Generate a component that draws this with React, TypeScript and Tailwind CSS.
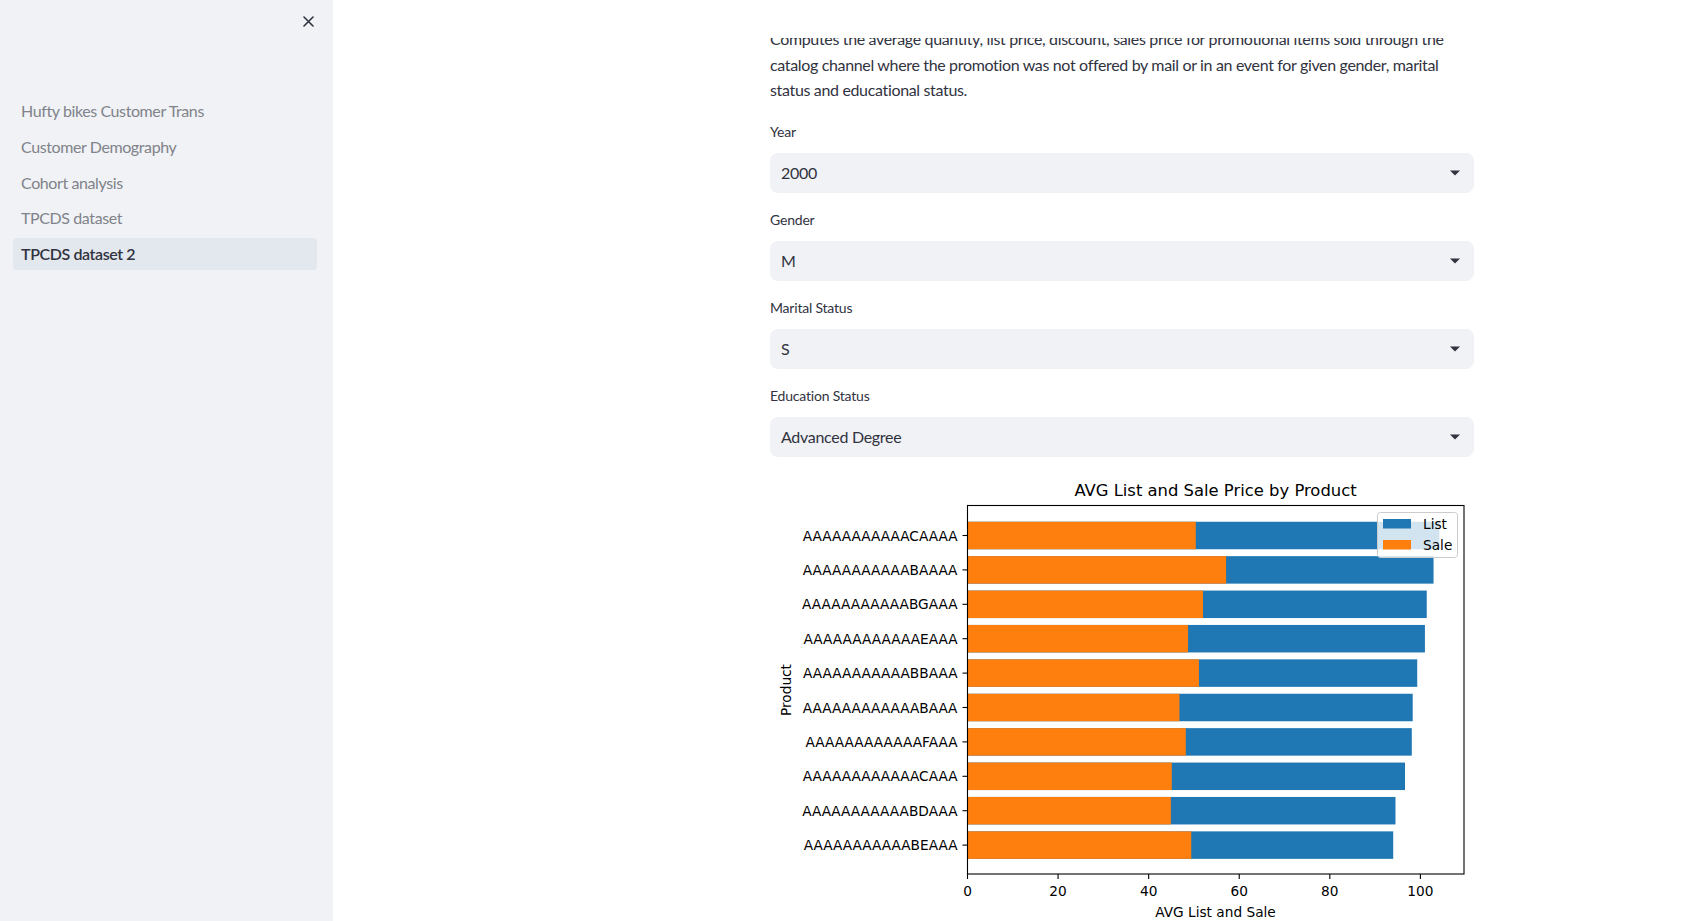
import React from 'react';

const navItems = [
  'Hufty bikes Customer Trans',
  'Customer Demography',
  'Cohort analysis',
  'TPCDS dataset',
  'TPCDS dataset 2',
];

const fields = [
  { label: 'Year', value: '2000' },
  { label: 'Gender', value: 'M' },
  { label: 'Marital Status', value: 'S' },
  { label: 'Education Status', value: 'Advanced Degree' },
];

// average list / sale price per product, top row first
const rows = [
  { id: 'AAAAAAAAAAACAAAA', list: 104.2, sale: 50.4 },
  { id: 'AAAAAAAAAAABAAAA', list: 102.9, sale: 57.1 },
  { id: 'AAAAAAAAAAABGAAA', list: 101.4, sale: 52.0 },
  { id: 'AAAAAAAAAAAAEAAA', list: 101.0, sale: 48.7 },
  { id: 'AAAAAAAAAAABBAAA', list: 99.3, sale: 51.1 },
  { id: 'AAAAAAAAAAAABAAA', list: 98.3, sale: 46.8 },
  { id: 'AAAAAAAAAAAAFAAA', list: 98.1, sale: 48.2 },
  { id: 'AAAAAAAAAAAACAAA', list: 96.6, sale: 45.1 },
  { id: 'AAAAAAAAAAABDAAA', list: 94.5, sale: 44.9 },
  { id: 'AAAAAAAAAAABEAAA', list: 94.0, sale: 49.4 },
];

const BLUE = '#1f77b4';
const ORANGE = '#ff7f0e';
const AX_L = 967.5;
const AX_R = 1464;
const AX_T = 505.5;
const AX_B = 874;
const PX = 4.529;
const ROW0 = 535.5;
const ROW_STEP = 34.4;
const BAR_H = 27.5;

const sx = (v: number) => AX_L + v * PX;

const Chart: React.FC = () => {
  const font = "'DejaVu Sans', sans-serif";
  return (
    <svg
      width={704}
      height={460}
      viewBox="770 470 704 460"
      className="block"
      style={{ fontFamily: font }}
    >
      <text x={1215.5} y={496} fontSize={16.4} textAnchor="middle" fill="#000">
        AVG List and Sale Price by Product
      </text>

      {rows.map((r, i) => {
        const cy = ROW0 + i * ROW_STEP;
        return (
          <g key={r.id}>
            <rect x={AX_L} y={cy - BAR_H / 2} width={r.list * PX} height={BAR_H} fill={BLUE} />
            <rect x={AX_L} y={cy - BAR_H / 2} width={r.sale * PX} height={BAR_H} fill={ORANGE} />
            <line x1={AX_L - 5} x2={AX_L} y1={cy} y2={cy} stroke="#000" strokeWidth={1.1} />
            <text x={AX_L - 10} y={cy + 5} fontSize={13.7} textAnchor="end" fill="#000">
              {r.id}
            </text>
          </g>
        );
      })}

      <rect
        x={AX_L}
        y={AX_T}
        width={AX_R - AX_L}
        height={AX_B - AX_T}
        fill="none"
        stroke="#000"
        strokeWidth={1.1}
      />

      {[0, 20, 40, 60, 80, 100].map((t) => (
        <g key={t}>
          <line x1={sx(t)} x2={sx(t)} y1={AX_B} y2={AX_B + 5} stroke="#000" strokeWidth={1.1} />
          <text x={sx(t)} y={896} fontSize={13.7} textAnchor="middle" fill="#000">
            {t}
          </text>
        </g>
      ))}

      <text x={1215.5} y={916.5} fontSize={13.7} textAnchor="middle" fill="#000">
        AVG List and Sale
      </text>
      <text
        fontSize={13.7}
        textAnchor="middle"
        fill="#000"
        transform="translate(791 690) rotate(-90)"
      >
        Product
      </text>

      <rect
        x={1377.5}
        y={512.5}
        width={80}
        height={45}
        rx={3}
        fill="#fff"
        fillOpacity={0.8}
        stroke="#cccccc"
        strokeWidth={1}
      />
      <rect x={1383} y={519} width={28} height={9.5} fill={BLUE} />
      <rect x={1383} y={540} width={28} height={9.5} fill={ORANGE} />
      <text x={1423} y={528.5} fontSize={13.7} fill="#000">
        List
      </text>
      <text x={1423} y={549.5} fontSize={13.7} fill="#000">
        Sale
      </text>
    </svg>
  );
};

const SelectBox: React.FC<{ label: string; value: string }> = ({ label, value }) => (
  <div className="mb-[17px]">
    <div className="h-[20px] mb-[11px] flex items-center text-[14px] tracking-[-0.2px] text-[#31333f]">
      {label}
    </div>
    <div className="h-[40px] rounded-[8px] bg-[#f0f2f6] flex items-center justify-between pl-[11px] pr-[14px]">
      <span className="text-[16px] tracking-[-0.3px] text-[#31333f]">{value}</span>
      <svg width="10" height="6" viewBox="0 0 10 6">
        <path d="M0 0.5h10L5 5.5z" fill="#31333f" />
      </svg>
    </div>
  </div>
);

export default function App() {
  return (
    <div
      className="flex h-screen w-full overflow-hidden bg-white text-[#31333f]"
      style={{ fontFamily: "Lato, 'Liberation Sans', sans-serif" }}
    >
      <aside className="w-[333px] shrink-0 bg-[#f0f2f6] flex flex-col">
        <div className="flex justify-end pt-[16px] pr-[19px]">
          <button className="w-[11px] h-[11px] flex items-center justify-center">
            <svg width="11" height="11" viewBox="0 0 11 11">
              <path d="M1 1L10 10M10 1L1 10" stroke="#31333f" strokeWidth="1.6" strokeLinecap="round" />
            </svg>
          </button>
        </div>
        <nav className="mt-[68px] pl-[13px] pr-[16px] flex flex-col gap-[3.75px]">
          {navItems.map((item, i) => {
            const active = i === navItems.length - 1;
            return (
              <div
                key={item}
                className={
                  active
                    ? 'h-[32px] px-[8px] rounded-[4px] flex items-center bg-[#e3e7ee] text-[16px] tracking-[-0.4px] font-semibold text-[#31333f]'
                    : 'h-[32px] px-[8px] rounded-[4px] flex items-center text-[16px] tracking-[-0.4px] text-[#808389]'
                }
              >
                {item}
              </div>
            );
          })}
        </nav>
      </aside>

      <main className="flex-1 flex flex-col overflow-hidden">
        <div className="h-[38px] shrink-0 bg-white" />
        <div className="flex-1 overflow-hidden">
          <div className="ml-[437px] w-[704px] -mt-[12px]">
            <p className="text-[16px] leading-[25.6px] tracking-[-0.34px] text-[#31333f]">
              <span className="block whitespace-nowrap">
                Computes the average quantity, list price, discount, sales price for promotional items sold through the
              </span>
              <span className="block whitespace-nowrap">
                catalog channel where the promotion was not offered by mail or in an event for given gender, marital
              </span>
              <span className="block whitespace-nowrap">status and educational status.</span>
            </p>
            <div className="mt-[19px]">
              {fields.map((f, i) => (
                <div key={f.label} className={i === 3 ? 'mt-[1px]' : ''}>
                  <SelectBox label={f.label} value={f.value} />
                </div>
              ))}
            </div>
            <div className="-mt-[4px]">
              <Chart />
            </div>
          </div>
        </div>
      </main>
    </div>
  );
}
